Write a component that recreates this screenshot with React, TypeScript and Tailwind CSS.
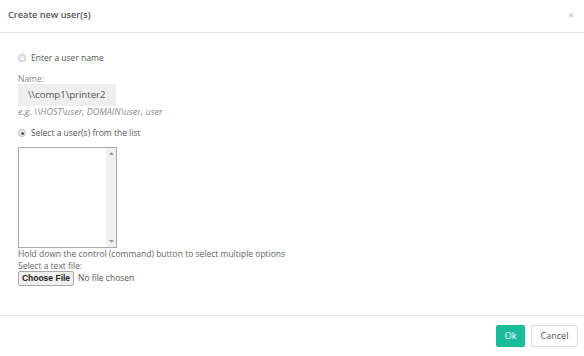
import React from "react";

export default function App() {
  const f = { fontFamily: '"Open Sans", "Liberation Sans", sans-serif' };
  return (
    <div className="w-[584px] h-[356px] bg-white flex flex-col text-[#555]" style={f}>
      <div className="h-[33px] border-b border-[#e5e5e5] flex items-center justify-between pl-[8px] pr-[10px] pb-[2px]">
        <span className="text-[9.2px] font-semibold text-[#555]">Create new user(s)</span>
        <span className="text-[10px] text-[#bbb] leading-none">×</span>
      </div>
      <div className="flex-1 flex flex-col pl-[18px] pt-[19px]">
        <label className="flex items-center h-[12px] text-[8.5px] text-[#555] leading-[12px]">
          <span className="w-[8px] h-[8px] rounded-full border border-[#bbb] bg-[#f0f0f0] mr-[5px]"></span>
          Enter a user name
        </label>
        <div className="mt-[9px] h-[11px] text-[8.5px] text-[#888] leading-[11px]">Name:</div>
        <div className="w-[98px] h-[22px] bg-[#eee] flex items-center pl-[10px] text-[9.6px] text-[#555]">
          \\comp1\printer2
        </div>
        <div className="h-[12px] text-[9px] italic text-[#888] leading-[12px]">
          e.g. \\HOST\user, DOMAIN\user, user
        </div>
        <label className="mt-[9px] flex items-center h-[12px] text-[8.5px] text-[#555] leading-[12px]">
          <span className="w-[8px] h-[8px] rounded-full border border-[#bbb] bg-[#f0f0f0] mr-[5px] flex items-center justify-center">
            <span className="w-[3px] h-[3px] rounded-full bg-[#555]"></span>
          </span>
          Select a user(s) from the list
        </label>
        <div className="mt-[8px] w-[99px] h-[101px] border border-[#aaa] flex justify-end">
          <div className="w-[10px] h-full bg-[#f0f0f0] flex flex-col items-center justify-between py-[4px]">
            <svg width="5" height="3" viewBox="0 0 5 3"><path d="M0 3 L2.5 0 L5 3Z" fill="#999" /></svg>
            <svg width="5" height="3" viewBox="0 0 5 3"><path d="M0 0 L2.5 3 L5 0Z" fill="#999" /></svg>
          </div>
        </div>
        <div className="h-[12px] text-[8.5px] leading-[12px] text-[#666]">
          Hold down the control (command) button to select multiple options
        </div>
        <div className="h-[11px] text-[8.5px] leading-[11px] text-[#666]">Select a text file:</div>
        <div className="flex items-center">
          <span
            className="h-[15px] w-[56px] justify-center border border-[#aaa] rounded-[2px] bg-[#efefef] text-[8.5px] text-[#222] flex items-center leading-none"
            style={{ fontFamily: '"Liberation Sans", Arial, sans-serif', fontWeight: 700 }}
          >
            Choose File
          </span>
          <span className="ml-[4px] text-[8.5px] text-[#555]">No file chosen</span>
        </div>
      </div>
      <div className="h-[41px] border-t border-[#e5e5e5] flex items-center justify-end pr-[6px] gap-[6px]">
        <button className="h-[22px] w-[29px] bg-[#1abc9c] text-white text-[9px] rounded-[2px]">Ok</button>
        <button className="h-[22px] w-[47px] border border-[#ddd] bg-white text-[#555] text-[9px] rounded-[2px]">Cancel</button>
      </div>
    </div>
  );
}
